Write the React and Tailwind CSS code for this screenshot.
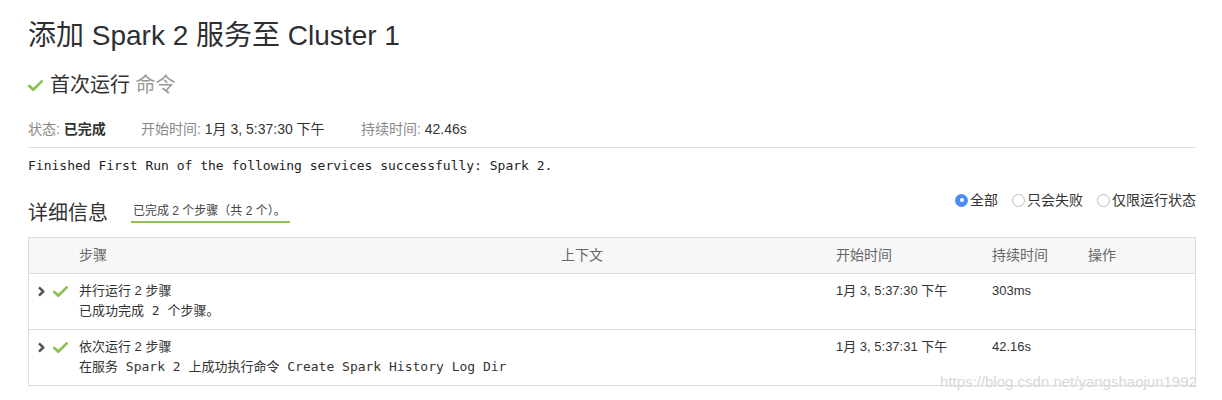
import React from "react";

const SANS = "font-['Liberation_Sans','Noto_Sans_CJK_SC',sans-serif]";
const MONO = "font-['DejaVu_Sans_Mono','Noto_Sans_CJK_SC',monospace]";

const Check = ({ className = "" }) => (
  <svg viewBox="0 0 16 16" className={className}>
    <path d="M1.5 8.6 L5.6 12.6 L14.6 3.6" fill="none" stroke="#8dc153" strokeWidth="3" strokeLinecap="round" strokeLinejoin="round" />
  </svg>
);

const Chevron = () => (
  <svg viewBox="0 0 10 12" className="h-[11px] w-[9px]">
    <path d="M2.2 1.5 L7 6 L2.2 10.5" fill="none" stroke="#555" strokeWidth="2.8" strokeLinejoin="round" />
  </svg>
);

const Radio = ({ checked, label }) => (
  <label className="flex items-center gap-[2px]">
    {checked ? (
      <span className="flex h-[13px] w-[13px] items-center justify-center rounded-full bg-[#4a8df0]">
        <span className="h-[4px] w-[4px] rounded-full bg-white" />
      </span>
    ) : (
      <span className="h-[13px] w-[13px] rounded-full border border-[#bbb] bg-white" />
    )}
    <span>{label}</span>
  </label>
);

const rows = [
  { title: "并行运行 2 步骤", sub: "已成功完成 2 个步骤。", start: "1月 3, 5:37:30 下午", dur: "303ms" },
  { title: "依次运行 2 步骤", sub: "在服务 Spark 2 上成功执行命令 Create Spark History Log Dir", start: "1月 3, 5:37:31 下午", dur: "42.16s" },
];

const COLS = "grid grid-cols-[50px_281px_444px_188px_96px_1fr]";

export default function App() {
  return (
    <div className={`relative h-[400px] w-[1222px] overflow-hidden bg-white pl-[28px] pr-[26px] pt-[18px] text-[#333] ${SANS}`}>
      <h1 className="text-[28px] leading-[36px] text-[#2d2f33]">添加 Spark 2 服务至 Cluster 1</h1>

      <div className="mt-[18px] flex items-center gap-[7px] text-[20px] leading-[26px]">
        <Check className="h-[15px] w-[15px]" />
        <span className="text-[#333]">首次运行 <span className="text-[#999]">命令</span></span>
      </div>

      <div className="mt-[21px] flex text-[14px] leading-[20px]">
        <span className="w-[113px] text-[#888]">状态: <span className="font-bold text-[#333]">已完成</span></span>
        <span className="w-[220px] text-[#888]">开始时间: <span className="text-[#333]">1月 3, 5:37:30 下午</span></span>
        <span className="text-[#888]">持续时间: <span className="text-[#333]">42.46s</span></span>
      </div>

      <div className="mt-[8px] border-t border-[#ddd]" />

      <p className={`mt-[9px] text-[13px] leading-[18px] text-[#222] ${MONO}`}>
        Finished First Run of the following services successfully: Spark 2.
      </p>

      <div className="mt-[15px] flex items-start justify-between">
        <div className="mt-[10px] flex h-[26px] items-center">
          <h2 className="text-[20px] leading-[26px] text-[#333]">详细信息</h2>
          <span className="ml-[23px] mt-[-2px] border-b-2 border-[#8dc153] px-[2px] pb-[1px] pr-[4px] text-[12px] leading-[18px] text-[#444]">
            已完成 2 个步骤（共 2 个）。
          </span>
        </div>
        <div className="flex gap-[14px] text-[14px] leading-[20px] text-[#333]">
          <Radio checked label="全部" />
          <Radio label="只会失败" />
          <Radio label="仅限运行状态" />
        </div>
      </div>

      <div className="mt-[11px] border border-[#ddd] text-[13px]">
        <div className={`${COLS} h-[35px] items-center bg-[#f7f7f7] text-[14px] text-[#666]`}>
          <span />
          <span>步骤</span>
          <span className="text-center">上下文</span>
          <span className="pl-[32px]">开始时间</span>
          <span>持续时间</span>
          <span>操作</span>
        </div>
        {rows.map((r) => (
          <div key={r.title} className={`${COLS} h-[56px] border-t border-[#ddd] pt-[8px] text-[#333]`}>
            <div className="flex h-[18px] items-center gap-[7px] pl-[8px]">
              <Chevron />
              <Check className="h-[15px] w-[15px]" />
            </div>
            <div className="col-span-2 leading-[18px]">
              <div>{r.title}</div>
              <div className={`mt-[2px] whitespace-nowrap text-[13px] ${MONO}`}>{r.sub}</div>
            </div>
            <span className="pl-[32px] leading-[18px]">{r.start}</span>
            <span className="leading-[18px]">{r.dur}</span>
            <span />
          </div>
        ))}
      </div>

      <div className="absolute left-[940px] top-[372px] text-[15px] leading-[20px] text-[#d8d8d8]">
        https://blog.csdn.net/yangshaojun1992
      </div>
    </div>
  );
}
